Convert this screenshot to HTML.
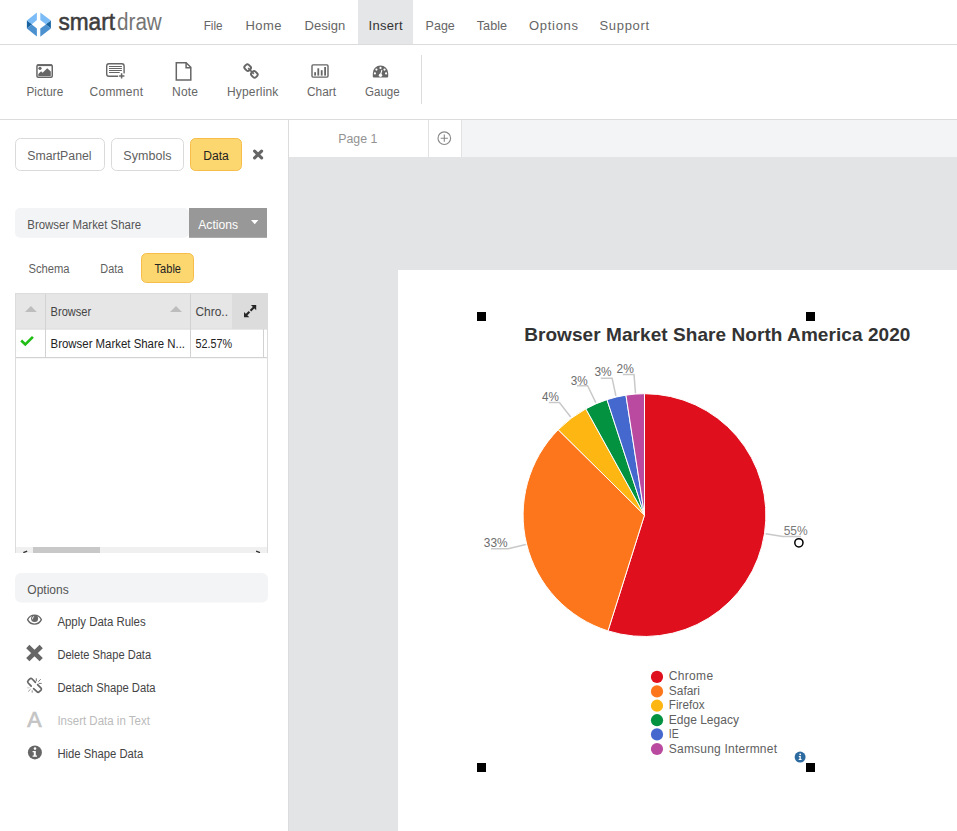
<!DOCTYPE html>
<html><head><meta charset="utf-8"><title>SmartDraw - Browser Market Share</title>
<style>
html,body{margin:0;padding:0;background:#fff;overflow:hidden;width:957px;height:831px}
svg{display:block;font-family:"Liberation Sans",sans-serif}
</style></head><body>
<svg width="957" height="831" viewBox="0 0 957 831">
<rect x="358" y="0" width="55" height="44" fill="#e5e6e8"/>
<rect x="0" y="44" width="957" height="1" fill="#dcdcdc"/>
<g><polygon points="26.9,20.5 32.2,24.3 26.9,28.6" fill="#18639f"/><polygon points="50.9,20.5 45.6,24.3 50.9,28.6" fill="#18639f"/><polygon points="26.9,20.5 36.9,12.6 36.9,20.1 31.9,24.2" fill="#7bbcf7"/><polygon points="50.9,20.5 40.3,12.4 40.3,20.1 45.9,24.2" fill="#7bbcf7"/><polygon points="26.9,28.4 31.9,24.4 36.9,28.5 36.9,36.5" fill="#4b90cf"/><polygon points="50.9,28.4 45.9,24.4 40.3,28.5 40.3,36.7" fill="#4b90cf"/></g>
<text stroke="#3d3d3d" stroke-width="0.55" x="58.4" y="30" font-size="23.5" fill="#3d3d3d" textLength="56.6" lengthAdjust="spacingAndGlyphs">smart</text>
<text x="117" y="30" font-size="23.5" fill="#757575" textLength="44.8" lengthAdjust="spacingAndGlyphs">draw</text>
<text x="203.7" y="29.6" font-size="13" fill="#666" textLength="18.9" lengthAdjust="spacingAndGlyphs">File</text>
<text x="245.5" y="29.6" font-size="13" fill="#666" textLength="36.1" lengthAdjust="spacing">Home</text>
<text x="304.5" y="29.6" font-size="13" fill="#666" textLength="40.7" lengthAdjust="spacing">Design</text>
<text x="368.5" y="29.6" font-size="13" fill="#333" textLength="34.1" lengthAdjust="spacing">Insert</text>
<text x="425.6" y="29.6" font-size="13" fill="#666" textLength="29.2" lengthAdjust="spacingAndGlyphs">Page</text>
<text x="476.8" y="29.6" font-size="13" fill="#666" textLength="30.2" lengthAdjust="spacingAndGlyphs">Table</text>
<text x="529" y="29.6" font-size="13" fill="#666" textLength="49" lengthAdjust="spacing">Options</text>
<text x="599.5" y="29.6" font-size="13" fill="#666" textLength="49.7" lengthAdjust="spacing">Support</text>
<text x="26.5" y="95.9" font-size="12" fill="#666" textLength="36.7" lengthAdjust="spacingAndGlyphs">Picture</text>
<text x="89.6" y="95.9" font-size="12" fill="#666" textLength="53.4" lengthAdjust="spacing">Comment</text>
<text x="172" y="95.9" font-size="12" fill="#666" textLength="26" lengthAdjust="spacing">Note</text>
<text x="227" y="95.9" font-size="12" fill="#666" textLength="51.3" lengthAdjust="spacing">Hyperlink</text>
<text x="307" y="95.9" font-size="12" fill="#666" textLength="29" lengthAdjust="spacingAndGlyphs">Chart</text>
<text x="365" y="95.9" font-size="12" fill="#666" textLength="34.7" lengthAdjust="spacingAndGlyphs">Gauge</text>
<rect x="421" y="55" width="1" height="49" fill="#dcdcdc"/>
<rect x="0" y="119" width="957" height="1" fill="#dcdcdc"/>
<rect x="36.95" y="64.95" width="15.3" height="12.3" rx="1.2" fill="none" stroke="#666" stroke-width="1.5"/><rect x="37.2" y="64.3" width="14.8" height="1.8" fill="#666"/><circle cx="40" cy="68.3" r="1.6" fill="#666"/><polygon points="38.3,76 38.3,74 41.1,71.3 42.6,72.8 47.2,68.2 50.8,71.5 50.8,76" fill="#666"/>
<rect x="106.7" y="63.7" width="17.4" height="12.6" rx="2.2" fill="none" stroke="#666" stroke-width="1.4"/><path d="M109 66.5h12.9M109 68.5h12.9M109 70.5h12.9M109 72.5h10.7" stroke="#666" stroke-width="1"/><rect x="118.2" y="73.4" width="7" height="6" fill="#fff"/><path d="M121.6 73.3v5.3M119.1 75.9h5.3" stroke="#666" stroke-width="1.5"/>
<path d="M176.3 62.7H186.1L190.8 67.3V79.9H176.3Z" fill="none" stroke="#666" stroke-width="1.5" stroke-linejoin="miter"/><path d="M186.1 62.7V67.8H190.8" fill="none" stroke="#666" stroke-width="1.5"/>
<g transform="translate(251,71) rotate(-45) scale(1.1)"><rect x="-2.5" y="-7.15" width="5" height="5.7" rx="1.8" fill="none" stroke="#666" stroke-width="1.7"/><rect x="-2.5" y="1.45" width="5" height="5.7" rx="1.8" fill="none" stroke="#666" stroke-width="1.7"/><path d="M0 -3.6v7.2" stroke="#666" stroke-width="1.5"/></g>
<rect x="312" y="64.9" width="16" height="12.2" rx="1" fill="none" stroke="#666" stroke-width="1.4"/><rect x="314.2" y="72.2" width="1.8" height="3.4" fill="#666"/><rect x="317.4" y="68.3" width="1.8" height="7.3" fill="#666"/><rect x="320.8" y="70.2" width="1.8" height="5.4" fill="#666"/><rect x="324.2" y="67" width="1.8" height="8.6" fill="#666"/>
<path d="M372.8 73.3A7.7 7.7 0 0 1 388.2 73.3V76.6Q388.2 77.6 387.2 77.6H373.8Q372.8 77.6 372.8 76.6Z" fill="#666"/><g fill="#fff"><circle cx="380.5" cy="67.9" r="1.1"/><circle cx="376.4" cy="69.6" r="1.1"/><circle cx="384.5" cy="69.6" r="1.1"/><circle cx="374.9" cy="73.4" r="1.1"/><circle cx="386.1" cy="73.4" r="1.1"/><circle cx="380.5" cy="75.3" r="1.7"/></g><path d="M380.5 75 L381.8 70.3" stroke="#fff" stroke-width="1.1" stroke-linecap="round"/>
<rect x="288" y="120" width="1" height="711" fill="#dcdcdc"/>
<rect x="15.5" y="138.5" width="89" height="32" rx="5" fill="#fff" stroke="#dadada"/>
<text x="27.3" y="160.4" font-size="12.5" fill="#5f5f5f" textLength="64.3" lengthAdjust="spacingAndGlyphs">SmartPanel</text>
<rect x="111.5" y="138.5" width="72" height="32" rx="5" fill="#fff" stroke="#dadada"/>
<text x="123.3" y="160.4" font-size="12.5" fill="#5f5f5f" textLength="48.3" lengthAdjust="spacing">Symbols</text>
<rect x="190.5" y="138.5" width="51" height="32" rx="5" fill="#fcd770" stroke="#f6bd4a"/>
<text x="203.2" y="160.4" font-size="12.5" fill="#222" textLength="25.6" lengthAdjust="spacingAndGlyphs">Data</text>
<path d="M254.6 151.1L261.6 157.9M261.6 151.1L254.6 157.9" stroke="#666" stroke-width="3.1" stroke-linecap="round"/>
<rect x="15" y="208" width="174" height="29.8" rx="5" fill="#f3f4f6"/>
<text x="27.3" y="229" font-size="12.5" fill="#555" textLength="113.8" lengthAdjust="spacingAndGlyphs">Browser Market Share</text>
<rect x="189" y="208" width="78" height="29.8" fill="#989898"/>
<text x="198.3" y="229" font-size="12.5" fill="#fff" textLength="39.7" lengthAdjust="spacingAndGlyphs">Actions</text>
<polygon points="251,220 258.4,220 254.7,224.2" fill="#fff"/>
<text x="28.4" y="273.2" font-size="12.5" fill="#5f5f5f" textLength="41.2" lengthAdjust="spacingAndGlyphs">Schema</text>
<text x="100.3" y="273.2" font-size="12.5" fill="#5f5f5f" textLength="23" lengthAdjust="spacingAndGlyphs">Data</text>
<rect x="141.5" y="253.5" width="52" height="29" rx="5" fill="#fcd770" stroke="#f6bd4a"/>
<text x="154.6" y="273.2" font-size="12.5" fill="#222" textLength="26.4" lengthAdjust="spacingAndGlyphs">Table</text>
<rect x="15.5" y="293.5" width="252" height="259" fill="#fff" stroke="#dcdcdc"/>
<rect x="16" y="294" width="251" height="34.5" fill="#e6e6e6"/>
<rect x="232" y="294" width="35.5" height="34.5" fill="#dcdcdc"/>
<rect x="45" y="294" width="1" height="63" fill="#d2d2d2"/>
<rect x="190" y="294" width="1" height="63" fill="#d2d2d2"/>
<rect x="263" y="329" width="1" height="28" fill="#d2d2d2"/>
<rect x="16" y="328.5" width="251" height="1" fill="#d2d2d2"/>
<rect x="16" y="357" width="251" height="1.2" fill="#d2d2d2"/>
<polygon points="25,312 36.8,312 30.9,306" fill="#bdbdbd"/>
<polygon points="170,312 182,312 176,306" fill="#bdbdbd"/>
<text x="50.6" y="316" font-size="12.5" fill="#444" textLength="40.6" lengthAdjust="spacingAndGlyphs">Browser</text>
<text x="195.5" y="316" font-size="12.5" fill="#444" textLength="32.5" lengthAdjust="spacingAndGlyphs">Chro..</text>
<path d="M21.2 340.5 L25.3 344.5 L32.9 336.8" fill="none" stroke="#20bd14" stroke-width="2.6"/>
<text x="50.6" y="347.7" font-size="12.5" fill="#222" textLength="134.4" lengthAdjust="spacingAndGlyphs">Browser Market Share N...</text>
<text x="195.5" y="347.7" font-size="12.5" fill="#222" textLength="36.7" lengthAdjust="spacingAndGlyphs">52.57%</text>
<path d="M246.2 315 L249.4 311.8 M250.5 310.7 L254 307.2" stroke="#262626" stroke-width="2.1"/><polygon points="244,317.3 244,312 249.3,317.3" fill="#262626"/><polygon points="256.2,305 256.2,310.3 250.9,305" fill="#262626"/>
<rect x="16" y="547" width="251" height="6" fill="#f0f0f0"/>
<rect x="33" y="547" width="67" height="6" fill="#c8c8c8"/>
<path d="M23.3 552.7L27.2 551.1M256.1 551.1L260 552.7" stroke="#333" stroke-width="1.3"/>
<rect x="0" y="553" width="288" height="10" fill="#fff"/>
<rect x="15" y="573" width="253" height="29.5" rx="6" fill="#f3f4f6"/>
<text x="27.3" y="594" font-size="12.5" fill="#555" textLength="41.4" lengthAdjust="spacingAndGlyphs">Options</text>
<text x="57.4" y="626.2" font-size="12.5" fill="#444" textLength="88.3" lengthAdjust="spacingAndGlyphs">Apply Data Rules</text>
<text x="57.4" y="659.3" font-size="12.5" fill="#444" textLength="93.7" lengthAdjust="spacingAndGlyphs">Delete Shape Data</text>
<text x="57.4" y="692" font-size="12.5" fill="#444" textLength="98.2" lengthAdjust="spacingAndGlyphs">Detach Shape Data</text>
<text x="57.4" y="724.9" font-size="12.5" fill="#bbb" textLength="92.5" lengthAdjust="spacingAndGlyphs">Insert Data in Text</text>
<text x="57.4" y="758" font-size="12.5" fill="#444" textLength="85.8" lengthAdjust="spacingAndGlyphs">Hide Shape Data</text>
<path d="M27.6 619.6 C30.5 613.6 38.5 613.6 41.4 619.6 C38.5 625.6 30.5 625.6 27.6 619.6Z" fill="none" stroke="#666" stroke-width="1.3"/><circle cx="34.6" cy="618.5" r="3.5" fill="#666"/><path d="M32.6 619.3 v-1.2 a1.5 1.5 0 0 1 1.5 -1.5" stroke="#fff" stroke-width="0.9" fill="none"/>
<path d="M27.8 646.5l13.4 13.2M41.2 646.5l-13.4 13.2" stroke="#666" stroke-width="4.6" stroke-linecap="butt"/>
<path d="M31.2 686.2 L28.2 683 Q27 681.7 28.3 680.3 L29.8 678.9 Q31 677.8 32.2 679 L35.4 682.3" fill="none" stroke="#666" stroke-width="1.7" stroke-linecap="round"/><path d="M37.6 684.7 L40.8 687.9 Q42 689.1 40.8 690.3 L39.3 691.7 Q38.1 692.9 36.9 691.7 L33.6 688.7" fill="none" stroke="#666" stroke-width="1.7" stroke-linecap="round"/><path d="M36.3 678.3v3M38.3 681.7l2.4-2.5M38.7 683.4h3" stroke="#666" stroke-width="0.9"/><path d="M27.2 687.8h2.4" stroke="#ccc" stroke-width="1.1"/><path d="M28.2 691.5l2.4-2.3M32.2 690.3v2.4" stroke="#888" stroke-width="0.9"/>
<text stroke="#c4c4c4" stroke-width="0.7" x="27.2" y="727.2" font-size="21.5" fill="#c4c4c4" textLength="14.8" lengthAdjust="spacing">A</text>
<circle cx="34.9" cy="752.4" r="7" fill="#666"/><circle cx="35" cy="748.6" r="1.3" fill="#fff"/><path d="M32.6 751h3.2v4.5h1.2v1.3h-4.4v-1.3h1.2v-3.2h-1.2z" fill="#fff"/>
<rect x="289" y="120" width="668" height="37" fill="#f3f4f6"/>
<rect x="289" y="120" width="172" height="37" fill="#fff"/>
<rect x="428" y="120" width="1" height="37" fill="#e2e2e2"/>
<rect x="461" y="120" width="1" height="37" fill="#e2e2e2"/>
<text x="338.2" y="143.3" font-size="12.5" fill="#929292" textLength="39.1" lengthAdjust="spacingAndGlyphs">Page 1</text>
<circle cx="444.3" cy="138.2" r="6.3" fill="none" stroke="#888" stroke-width="1.1"/><path d="M444.3 134.6v7.2M440.7 138.2h7.2" stroke="#888" stroke-width="1.1"/>
<rect x="289" y="157" width="668" height="674" fill="#e3e4e6"/>
<rect x="398" y="270" width="559" height="561" fill="#fff"/>
<rect x="477" y="312" width="9" height="9" fill="#000"/>
<rect x="806" y="312" width="9" height="9" fill="#000"/>
<rect x="477" y="763" width="9" height="9" fill="#000"/>
<rect x="806" y="763" width="9" height="9" fill="#000"/>
<text x="524.2" y="341" font-size="19" fill="#333" font-weight="bold" textLength="386.2" lengthAdjust="spacing">Browser Market Share North America 2020</text>
<path d="M644.5 515.1 L644.50 393.70 A121.4 121.4 0 1 1 607.99 630.88Z" fill="#e00f1d" stroke="#fff" stroke-width="1" stroke-linejoin="round"/>
<path d="M644.5 515.1 L607.99 630.88 A121.4 121.4 0 0 1 558.21 429.71Z" fill="#fd761b" stroke="#fff" stroke-width="1" stroke-linejoin="round"/>
<path d="M644.5 515.1 L558.21 429.71 A121.4 121.4 0 0 1 585.83 408.82Z" fill="#feb612" stroke="#fff" stroke-width="1" stroke-linejoin="round"/>
<path d="M644.5 515.1 L585.83 408.82 A121.4 121.4 0 0 1 606.99 399.64Z" fill="#029240" stroke="#fff" stroke-width="1" stroke-linejoin="round"/>
<path d="M644.5 515.1 L606.99 399.64 A121.4 121.4 0 0 1 625.93 395.13Z" fill="#4468cd" stroke="#fff" stroke-width="1" stroke-linejoin="round"/>
<path d="M644.5 515.1 L625.93 395.13 A121.4 121.4 0 0 1 644.50 393.70Z" fill="#b94a9f" stroke="#fff" stroke-width="1" stroke-linejoin="round"/>
<path d="M765.6 533.7 L782.8 536.6 L801 536.6" fill="none" stroke="#c9c9c9" stroke-width="1.5"/>
<path d="M525.8 544.4 L508.2 548.7 L491 548.7" fill="none" stroke="#c9c9c9" stroke-width="1.5"/>
<path d="M570.7 417 L559.4 402.6 L548.8 402.6" fill="none" stroke="#c9c9c9" stroke-width="1.5"/>
<path d="M595.8 402.6 L587.6 385.7 L577 385.7" fill="none" stroke="#c9c9c9" stroke-width="1.5"/>
<path d="M615.9 395.8 L612.1 378.2 L600.8 378.2" fill="none" stroke="#c9c9c9" stroke-width="1.5"/>
<path d="M635.5 393.2 L634 374.4 L622.8 374.4" fill="none" stroke="#c9c9c9" stroke-width="1.5"/>
<text x="783.7" y="534.6" font-size="12" fill="#7a7a7a" textLength="24" lengthAdjust="spacingAndGlyphs">55%</text>
<text x="483.8" y="546.6" font-size="12" fill="#6c6c6c" textLength="23.8" lengthAdjust="spacingAndGlyphs">33%</text>
<text x="541.9" y="401.4" font-size="12" fill="#6c6c6c" textLength="16.9" lengthAdjust="spacingAndGlyphs">4%</text>
<text x="570.7" y="384.5" font-size="12" fill="#6c6c6c" textLength="16.9" lengthAdjust="spacingAndGlyphs">3%</text>
<text x="594.5" y="375.7" font-size="12" fill="#6c6c6c" textLength="17.2" lengthAdjust="spacingAndGlyphs">3%</text>
<text x="616.5" y="373.2" font-size="12" fill="#6c6c6c" textLength="17.3" lengthAdjust="spacingAndGlyphs">2%</text>
<circle cx="657" cy="676.9" r="6.1" fill="#e00f1d"/>
<text x="668.8" y="680.4" font-size="12" fill="#606060" textLength="44.3" lengthAdjust="spacing">Chrome</text>
<circle cx="657" cy="691.4" r="6.1" fill="#fd761b"/>
<text x="668.8" y="694.9" font-size="12" fill="#606060" textLength="31.2" lengthAdjust="spacingAndGlyphs">Safari</text>
<circle cx="657" cy="705.7" r="6.1" fill="#feb612"/>
<text x="668.8" y="709.2" font-size="12" fill="#606060" textLength="35.7" lengthAdjust="spacingAndGlyphs">Firefox</text>
<circle cx="657" cy="720.2" r="6.1" fill="#029240"/>
<text x="668.8" y="723.7" font-size="12" fill="#606060" textLength="70.1" lengthAdjust="spacing">Edge Legacy</text>
<circle cx="657" cy="734.4" r="6.1" fill="#4468cd"/>
<text x="668.8" y="737.9" font-size="12" fill="#606060" textLength="9.9" lengthAdjust="spacingAndGlyphs">IE</text>
<circle cx="657" cy="749" r="6.1" fill="#b94a9f"/>
<text x="668.8" y="752.5" font-size="12" fill="#606060" textLength="108.2" lengthAdjust="spacing">Samsung Intermnet</text>
<circle cx="798.9" cy="542.8" r="4.1" fill="#fff" stroke="#000" stroke-width="1.5"/>
<circle cx="800.1" cy="757.1" r="5.5" fill="#2c6aa0"/><circle cx="800.2" cy="754.3" r="0.9" fill="#fff"/><path d="M798.8 756h2v3h0.8v0.9h-2.9v-0.9h0.8v-2.1h-0.7z" fill="#fff"/>
</svg>
</body></html>
